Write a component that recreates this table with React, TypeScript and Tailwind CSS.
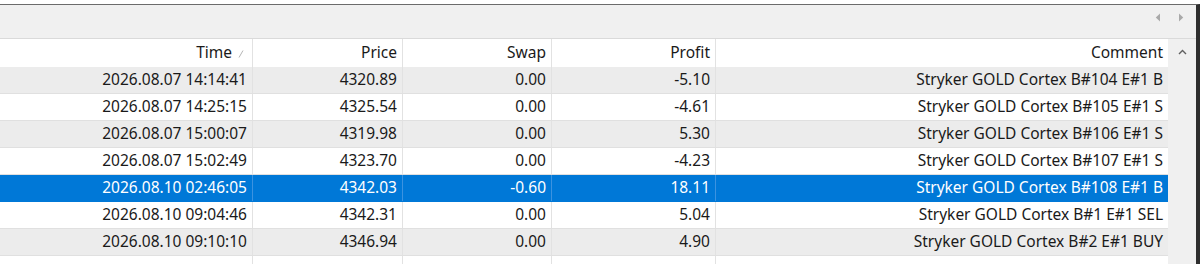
import React from 'react';

type Deal = { time: string; price: string; swap: string; profit: string; comment: string };

const deals: Deal[] = [
  { time: '2026.08.07 14:14:41', price: '4320.89', swap: '0.00', profit: '-5.10', comment: 'Stryker GOLD Cortex B#104 E#1 B' },
  { time: '2026.08.07 14:25:15', price: '4325.54', swap: '0.00', profit: '-4.61', comment: 'Stryker GOLD Cortex B#105 E#1 S' },
  { time: '2026.08.07 15:00:07', price: '4319.98', swap: '0.00', profit: '5.30', comment: 'Stryker GOLD Cortex B#106 E#1 S' },
  { time: '2026.08.07 15:02:49', price: '4323.70', swap: '0.00', profit: '-4.23', comment: 'Stryker GOLD Cortex B#107 E#1 S' },
  { time: '2026.08.10 02:46:05', price: '4342.03', swap: '-0.60', profit: '18.11', comment: 'Stryker GOLD Cortex B#108 E#1 B' },
  { time: '2026.08.10 09:04:46', price: '4342.31', swap: '0.00', profit: '5.04', comment: 'Stryker GOLD Cortex B#1 E#1 SEL' },
  { time: '2026.08.10 09:10:10', price: '4346.94', swap: '0.00', profit: '4.90', comment: 'Stryker GOLD Cortex B#2 E#1 BUY' },
];

const SELECTED = 4;

// column widths: Time, Price, Swap, Profit, Comment
const cols = ['w-[253px]', 'w-[150px]', 'w-[149px]', 'w-[164px]', 'w-[452px]'];

function Cell({ i, children, selected }: { i: number; children?: React.ReactNode; selected?: boolean }) {
  return (
    <div
      className={`${cols[i]} shrink-0 h-full flex items-center justify-end pr-[5px] border-r ${
        selected ? 'border-[#3c93e0]' : 'border-[#e2e2e2]'
      } ${i === 4 ? 'border-r-0' : ''}`}
    >
      {children}
    </div>
  );
}

export default function App() {
  return (
    <div
      className="w-[1200px] h-[264px] bg-white overflow-hidden pt-[4px] text-[#1a1a1a]"
      style={{ fontFamily: '"Noto Sans", "Open Sans", sans-serif' }}
    >
      <div className="h-[260px] flex flex-col border-t border-[#6b6b6b] border-r-[4px] border-r-[#2e2e2e]">
        {/* toolbar */}
        <div className="h-[34px] shrink-0 bg-[#f0f0f0] border-b border-[#dadada] flex justify-end items-start pt-[7px] pr-[12px] gap-[17px]">
          <svg width="6" height="9" viewBox="0 0 6 9" className="mt-[1px]">
            <path d="M5 0.5 L0.8 4.5 L5 8.5 Z" fill="#a9a9a9" />
          </svg>
          <svg width="6" height="9" viewBox="0 0 6 9" className="mt-[1px]">
            <path d="M1 0.5 L5.2 4.5 L1 8.5 Z" fill="#a9a9a9" />
          </svg>
        </div>

        <div className="flex flex-1 min-h-0">
          {/* table */}
          <div className="w-[1168px] shrink-0 flex flex-col text-[15.5px] leading-none">
            {/* header */}
            <div className="h-[28px] shrink-0 flex bg-white">
              <div className={`${cols[0]} shrink-0 h-full flex items-center justify-end pr-[8px] border-r border-[#e2e2e2]`}>
                <span>Time</span>
                <svg width="6" height="8" viewBox="0 0 6 8" className="ml-[6px] mt-[2px]">
                  <path d="M1 7.5 L5 0.5" stroke="#b5b5b5" strokeWidth="1" />
                </svg>
              </div>
              <Cell i={1}>Price</Cell>
              <Cell i={2}>Swap</Cell>
              <Cell i={3}>Profit</Cell>
              <Cell i={4}>Comment</Cell>
            </div>

            {deals.map((d, idx) => {
              const selected = idx === SELECTED;
              const bg = selected ? 'bg-[#0078d7] text-white' : idx % 2 === 0 ? 'bg-[#ececec]' : 'bg-white';
              return (
                <div key={d.time} className={`h-[27px] shrink-0 flex border-b ${selected ? 'border-[#0078d7]' : 'border-[#e0e0e0]'} ${bg}`}>
                  <Cell i={0} selected={selected}>{d.time}</Cell>
                  <Cell i={1} selected={selected}>{d.price}</Cell>
                  <Cell i={2} selected={selected}>{d.swap}</Cell>
                  <Cell i={3} selected={selected}>{d.profit}</Cell>
                  <Cell i={4} selected={selected}>{d.comment}</Cell>
                </div>
              );
            })}

            {/* empty space under the last row */}
            <div className="flex-1 flex bg-white">
              <Cell i={0} />
              <Cell i={1} />
              <Cell i={2} />
              <Cell i={3} />
              <Cell i={4} />
            </div>
          </div>

          {/* vertical scrollbar */}
          <div className="flex-1 bg-[#f0f0f0] flex justify-center pt-[10px]">
            <svg width="9" height="6" viewBox="0 0 9 6">
              <path d="M1 5 L4.5 1.5 L8 5" stroke="#606060" strokeWidth="1.4" fill="none" />
            </svg>
          </div>
        </div>
      </div>
    </div>
  );
}
